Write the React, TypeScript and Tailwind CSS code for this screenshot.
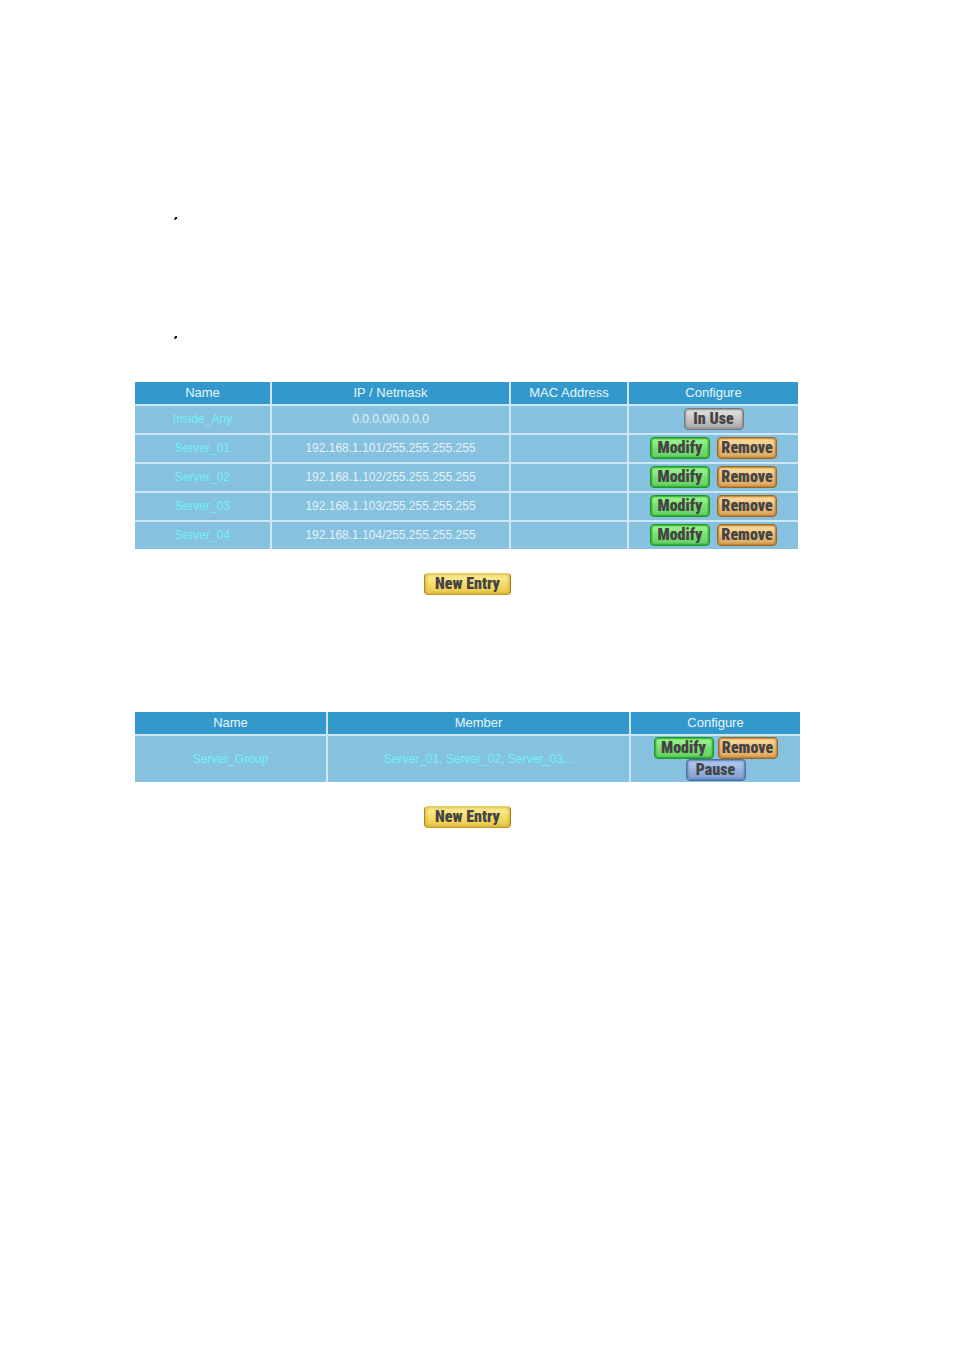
import type { ReactNode } from "react";

const tones = {
  gray: "border-[#77777b] bg-linear-to-b from-[#e6e6e6] via-[#c8c8c8] to-[#a6a6a6] shadow-[inset_0_0_2px_1px_#8c8c8c]",
  green: "border-[#1d9a22] bg-linear-to-b from-[#a4fb94] via-[#7ade72] to-[#66cf66] shadow-[inset_0_0_2px_1px_#25a52a]",
  orange: "border-[#a0651a] bg-linear-to-b from-[#ffe0a0] via-[#ecc080] to-[#d8a45c] shadow-[inset_0_0_2px_1px_#b87a2c]",
  blue: "border-[#4a6da6] bg-linear-to-b from-[#b4cdf0] via-[#98b4de] to-[#7b9acb] shadow-[inset_0_0_2px_1px_#587bb4]",
};

const servers = [
  { name: "Server_01", ip: "192.168.1.101/255.255.255.255" },
  { name: "Server_02", ip: "192.168.1.102/255.255.255.255" },
  { name: "Server_03", ip: "192.168.1.103/255.255.255.255" },
  { name: "Server_04", ip: "192.168.1.104/255.255.255.255" },
];

function ActionButton({ tone, children }: { tone: keyof typeof tones; children: ReactNode }) {
  return (
    <button
      type="button"
      className={`flex h-[22px] w-[60px] items-center justify-center rounded-[4px] border font-['Impact','Roboto_Condensed','Roboto',sans-serif] text-[16px] leading-none font-black whitespace-nowrap text-[#444444] ${tones[tone]}`}
    >
      {children}
    </button>
  );
}

function NewEntryButton() {
  return (
    <div className="mt-6 flex justify-center">
      <button
        type="button"
        className="flex h-[22px] w-[87px] items-center justify-center rounded-[4px] border border-t-[#e6cc5c] border-r-[#a87b14] border-b-[#c29a26] border-l-[#b58a1c] bg-linear-to-b from-[#fff3a0] via-[#f5dc68] to-[#ebca50] font-['Impact','Roboto_Condensed','Roboto',sans-serif] text-[16px] leading-none font-black whitespace-nowrap text-[#444444] shadow-[inset_0_0_4px_#c89a1c]"
      >
        New Entry
      </button>
    </div>
  );
}

function Th({ children, className = "" }: { children: ReactNode; className?: string }) {
  return (
    <th
      scope="col"
      className={`h-6 border-r-2 border-b-2 border-[#cfe6f4] bg-[#3399cc] p-0 text-[13px] leading-4 font-normal text-[#e8f6fc] last:border-r-0 ${className}`}
    >
      {children}
    </th>
  );
}

function Td({ children, className = "" }: { children?: ReactNode; className?: string }) {
  return (
    <td className={`border-r-2 border-[#cfe6f4] bg-[#86c2e0] px-0 text-[12px] leading-4 last:border-r-0 ${className}`}>
      {children}
    </td>
  );
}

function Bullet() {
  return (
    <li className="h-[119px]">
      <svg width="4" height="4" viewBox="0 0 4 4" aria-hidden="true">
        <path d="M1 0h2v2H1z" fill="#000" />
        <path d="M0 1h1v1H0zM0 2h2v1H0z" fill="#555" />
      </svg>
    </li>
  );
}

export default function App() {
  return (
    <main className="min-h-screen bg-white pt-[217px] pr-[154px] pb-16 pl-[135px] font-['Liberation_Sans',Arial,sans-serif]">
      <ul className="mb-[46px] h-[119px] pl-[39px]">
        <Bullet />
        <Bullet />
      </ul>

      <section aria-label="Server addresses">
        <div className="pr-0.5">
          <table className="w-full table-fixed border-separate border-spacing-0 text-center">
            <thead>
              <tr>
                <Th className="w-[137px]">Name</Th>
                <Th>IP / Netmask</Th>
                <Th className="w-[118px]">MAC Address</Th>
                <Th className="w-[169px]">Configure</Th>
              </tr>
            </thead>
            <tbody>
              <tr>
                <Td className="h-[29px] border-b-2 pb-0.5 text-[#70f0fa]">Inside_Any</Td>
                <Td className="border-b-2 pb-0.5 text-[#e4f1f7]">0.0.0.0/0.0.0.0</Td>
                <Td className="border-b-2" />
                <Td className="border-b-2 pb-0.5">
                  <div className="flex justify-center">
                    <ActionButton tone="gray">In Use</ActionButton>
                  </div>
                </Td>
              </tr>
              {servers.map((s, i) => {
                const line = i < servers.length - 1 ? "h-[29px] border-b-2 pb-0.5" : "h-[27px] pb-0.5";
                return (
                  <tr key={s.name}>
                    <Td className={`${line} text-[#70f0fa]`}>{s.name}</Td>
                    <Td className={`${line} text-[#e4f1f7]`}>{s.ip}</Td>
                    <Td className={line} />
                    <Td className={line}>
                      <div className="flex justify-center gap-[7px]">
                        <ActionButton tone="green">Modify</ActionButton>
                        <ActionButton tone="orange">Remove</ActionButton>
                      </div>
                    </Td>
                  </tr>
                );
              })}
            </tbody>
          </table>
        </div>
        <NewEntryButton />
      </section>

      <section aria-label="Server groups" className="mt-[117px]">
        <table className="w-full table-fixed border-separate border-spacing-0 text-center">
          <thead>
            <tr>
              <Th className="w-[193px]">Name</Th>
              <Th>Member</Th>
              <Th className="w-[169px]">Configure</Th>
            </tr>
          </thead>
          <tbody>
            <tr>
              <Td className="h-[46px] py-0 text-[#70f0fa]">Server_Group</Td>
              <Td className="py-0 text-[#70f0fa]">Server_01, Server_02, Server_03...</Td>
              <Td className="py-0">
                <div className="flex flex-wrap justify-center gap-x-1">
                  <ActionButton tone="green">Modify</ActionButton>
                  <ActionButton tone="orange">Remove</ActionButton>
                  <ActionButton tone="blue">Pause</ActionButton>
                </div>
              </Td>
            </tr>
          </tbody>
        </table>
        <NewEntryButton />
      </section>
    </main>
  );
}
